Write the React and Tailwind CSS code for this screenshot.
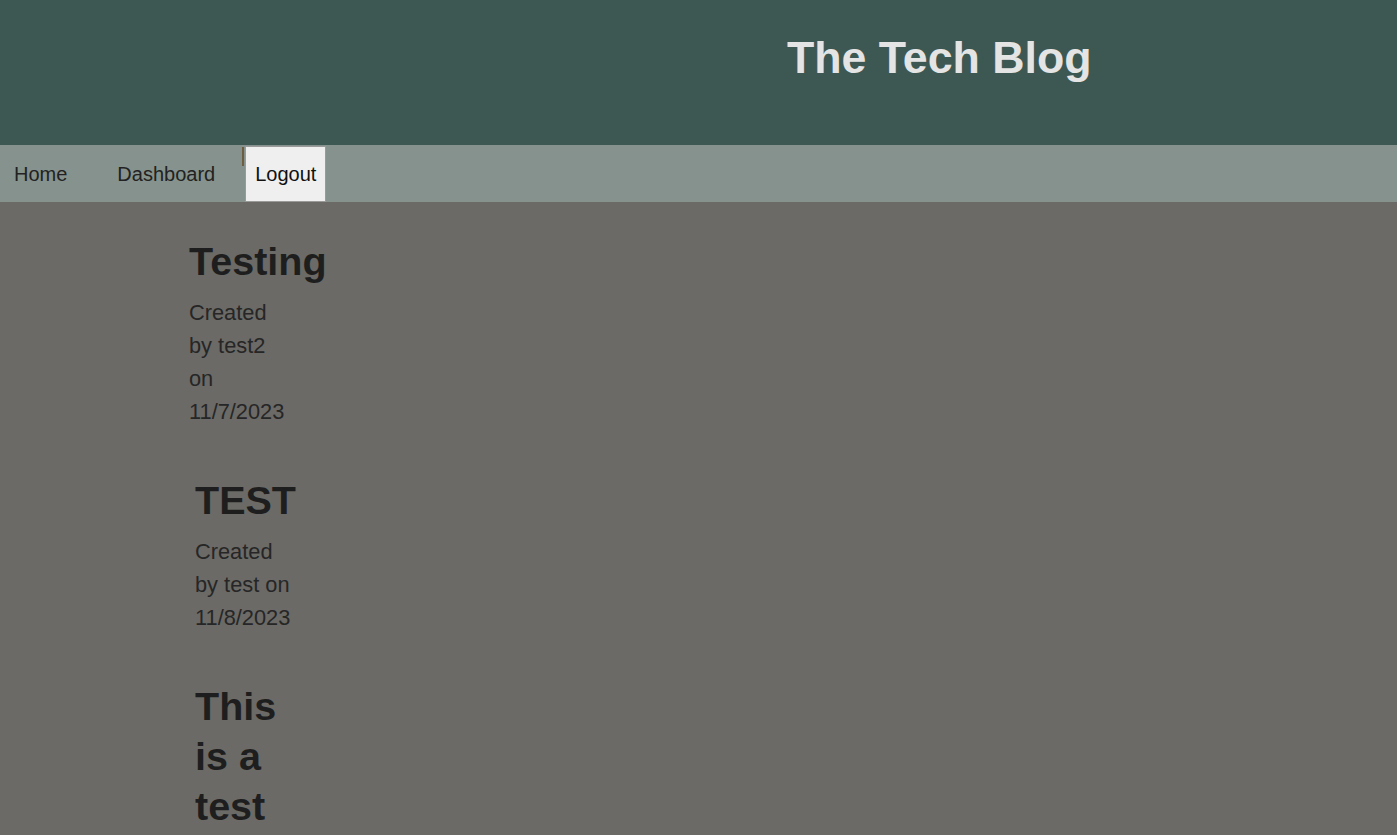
import React from "react";

const posts = [
  { title: "Testing", user: "test2", date: "11/7/2023", offset: "ml-[189px]" },
  { title: "TEST", user: "test", date: "11/8/2023", offset: "ml-[195px]" },
  { title: "This is a test", user: "test", date: "11/8/2023", offset: "ml-[195px]" },
];

const App = () => {
  return (
    <div className="min-h-screen bg-[#6b6a66] font-['Liberation_Sans',Arial,sans-serif]">
      <header className="h-[145px] bg-[#3d5853]">
        <h1 className="pl-[787px] pt-[24px] text-[44.7px] font-bold leading-normal text-[#e4e4e4]">
          The Tech Blog
        </h1>
      </header>
      <nav className="flex h-[57px] items-stretch bg-[#86928d] text-[20px] text-[#222]">
        <a className="ml-[14px] flex items-center">Home</a>
        <a className="ml-[50px] flex items-center">Dashboard</a>
        <div className="ml-[27px] mt-[2px] h-[19px] w-[2px] bg-[#6e5d3e]" />
        <button className="ml-[1px] mt-px border border-[#9a9a9a] bg-[#efefef] px-[9px] text-[20px] text-[#111]">
          Logout
        </button>
      </nav>
      <main className="pt-[34px]">
        {posts.map((p) => (
          <div key={p.title} className={`${p.offset} mb-[47px] w-[102px]`}>
            <h2 className="text-[39.5px] font-bold leading-[50px] text-[#1e1e1e]">
              {p.title}
            </h2>
            <p className="mt-[10px] text-[21.8px] leading-[33px] text-[#262626]">
              Created by {p.user} on {p.date}
            </p>
          </div>
        ))}
      </main>
    </div>
  );
};

export default App;
